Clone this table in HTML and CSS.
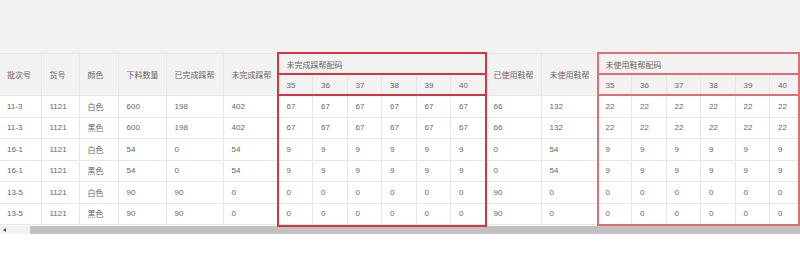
FILE: index.html
```html
<!DOCTYPE html>
<html lang="zh">
<head>
<meta charset="utf-8">
<link rel="stylesheet" href="styles.css">
</head>
<body>
<div class="top"></div>
<div class="wrap">
  <div class="viewport">
    <table class="grid">
      <colgroup>
        <col class="c41"><col class="c38"><col class="c39"><col class="c48"><col class="c57"><col class="c55">
        <col class="cs"><col class="cs"><col class="cs"><col class="cs"><col class="cs"><col class="cs">
        <col class="c56"><col class="c56">
        <col class="cs"><col class="cs"><col class="cs"><col class="cs"><col class="cs"><col class="cs">
      </colgroup>
      <thead>
        <tr class="h1">
          <th rowspan="2" class="first">批次号</th>
          <th rowspan="2">货号</th>
          <th rowspan="2">颜色</th>
          <th rowspan="2">下料数量</th>
          <th rowspan="2">已完成踩帮</th>
          <th rowspan="2">未完成踩帮</th>
          <th colspan="6">未完成踩帮配码</th>
          <th rowspan="2">已使用鞋帮</th>
          <th rowspan="2">未使用鞋帮</th>
          <th colspan="6">未使用鞋帮配码</th>
        </tr>
        <tr class="h2">
          <th>35</th><th>36</th><th>37</th><th>38</th><th>39</th><th>40</th>
          <th>35</th><th>36</th><th>37</th><th>38</th><th>39</th><th>40</th>
        </tr>
      </thead>
      <tbody>
        <tr><td class="first">11-3</td><td>1121</td><td>白色</td><td>600</td><td>198</td><td>402</td><td>67</td><td>67</td><td>67</td><td>67</td><td>67</td><td>67</td><td>66</td><td>132</td><td>22</td><td>22</td><td>22</td><td>22</td><td>22</td><td>22</td></tr>
        <tr><td class="first">11-3</td><td>1121</td><td>黑色</td><td>600</td><td>198</td><td>402</td><td>67</td><td>67</td><td>67</td><td>67</td><td>67</td><td>67</td><td>66</td><td>132</td><td>22</td><td>22</td><td>22</td><td>22</td><td>22</td><td>22</td></tr>
        <tr><td class="first">16-1</td><td>1121</td><td>白色</td><td>54</td><td>0</td><td>54</td><td>9</td><td>9</td><td>9</td><td>9</td><td>9</td><td>9</td><td>0</td><td>54</td><td>9</td><td>9</td><td>9</td><td>9</td><td>9</td><td>9</td></tr>
        <tr><td class="first">16-1</td><td>1121</td><td>黑色</td><td>54</td><td>0</td><td>54</td><td>9</td><td>9</td><td>9</td><td>9</td><td>9</td><td>9</td><td>0</td><td>54</td><td>9</td><td>9</td><td>9</td><td>9</td><td>9</td><td>9</td></tr>
        <tr><td class="first">13-5</td><td>1121</td><td>白色</td><td>90</td><td>90</td><td>0</td><td>0</td><td>0</td><td>0</td><td>0</td><td>0</td><td>0</td><td>90</td><td>0</td><td>0</td><td>0</td><td>0</td><td>0</td><td>0</td><td>0</td></tr>
        <tr><td class="first">13-5</td><td>1121</td><td>黑色</td><td>90</td><td>90</td><td>0</td><td>0</td><td>0</td><td>0</td><td>0</td><td>0</td><td>0</td><td>90</td><td>0</td><td>0</td><td>0</td><td>0</td><td>0</td><td>0</td><td>0</td></tr>
      </tbody>
    </table>
  </div>
  <div class="scrollbar">
    <div class="arrow"></div>
    <div class="thumb"></div>
  </div>
  <div class="mark mark-a"><div class="line l1"></div><div class="line l2"></div></div>
  <div class="mark mark-b"><div class="line l1"></div><div class="line l2"></div></div>
</div>
</body>
</html>
```

FILE: styles.css
```css
html, body {
  margin: 0;
  padding: 0;
  background: #fff;
  width: 800px;
  overflow: hidden;
}
body {
  font-family: "Liberation Sans", "Noto Sans CJK SC", sans-serif;
  font-size: 8px;
  color: #666;
}
.top {
  height: 53px;
  background: #f2f2f2;
}
.wrap {
  position: relative;
  width: 800px;
}
.viewport {
  width: 800px;
  overflow: hidden;
}
.grid {
  border-collapse: collapse;
  table-layout: fixed;
  width: 804px;
}
.c41 { width: 41px; }
.c38 { width: 38px; }
.c39 { width: 39px; }
.c48 { width: 48px; }
.c57 { width: 57px; }
.c55 { width: 55px; }
.c56 { width: 56px; }
.cs { width: 34.5px; }
.grid th, .grid td {
  border: 1px solid #e6e6e6;
  padding: 0 0 0 8px;
  text-align: left;
  font-weight: normal;
  white-space: nowrap;
  overflow: hidden;
}
.grid th.first, .grid td.first {
  border-left: none;
  padding-left: 7px;
}
.grid thead th {
  background: #f2f2f2;
  height: 20px;
}
.grid tbody td {
  height: 20.5px;
  background: #fff;
}
.scrollbar {
  display: flex;
  height: 8px;
  margin-top: 1px;
  background: #f1f1f1;
}
.arrow {
  width: 30px;
  position: relative;
}
.arrow::before {
  content: "";
  position: absolute;
  left: 3px;
  top: 2px;
  border-style: solid;
  border-width: 2px 3px 2px 0;
  border-color: transparent #505050 transparent transparent;
}
.thumb {
  flex: 1;
  background: #c1c1c1;
}
.mark {
  position: absolute;
  top: -1px;
  border: 2px solid #d9343e;
  box-sizing: border-box;
}
.mark-a {
  left: 277px;
  width: 210px;
  height: 175px;
}
.mark-b {
  left: 597px;
  width: 203px;
  height: 174px;
  border-color: #e06c74;
}
.line {
  position: absolute;
  left: 0;
  right: 0;
  height: 2px;
}
.mark-a .line { background: #d9343e; }
.mark-b .line { background: #e06c74; }
.l1 { top: 19px; }
.l2 { top: 40px; }
```
